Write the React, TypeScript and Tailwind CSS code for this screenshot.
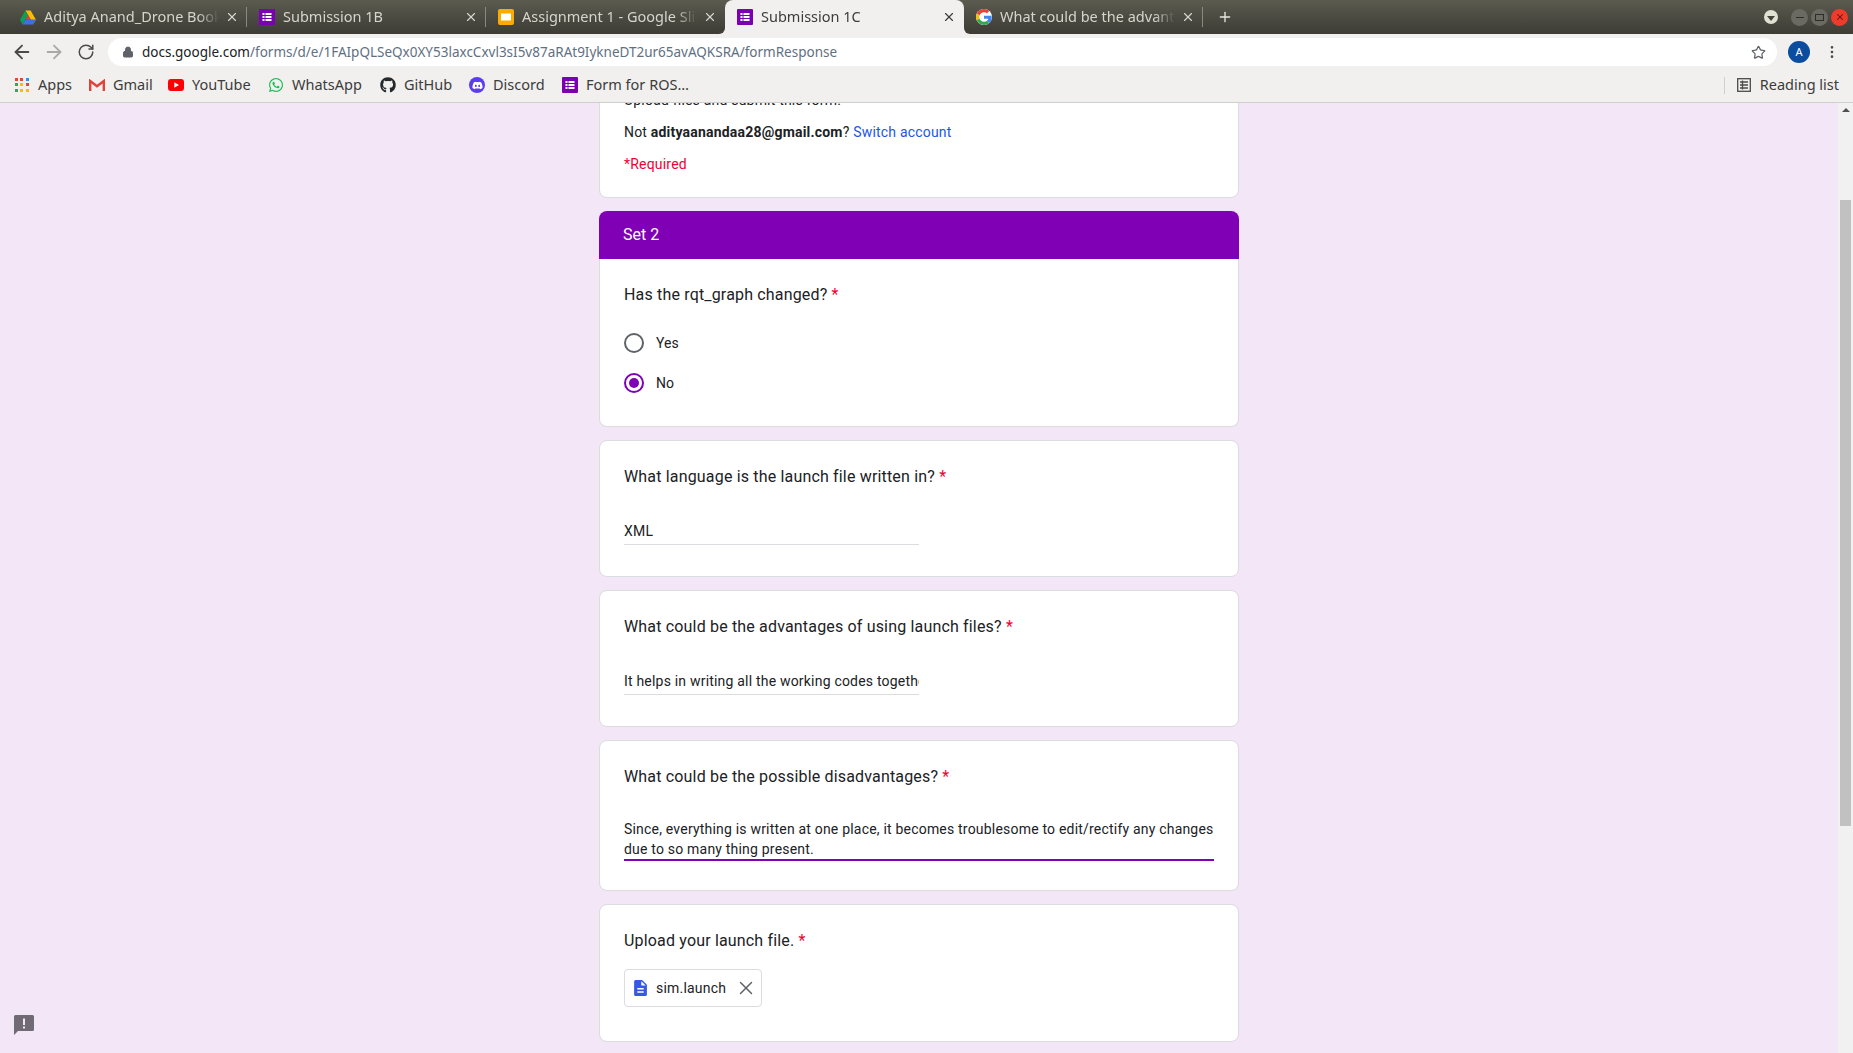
import { ArrowLeft, ArrowRight, EllipsisVertical, Lock, Plus, RotateCw, Star, X } from "lucide-react";
import { FaDiscord, FaGithub, FaWhatsapp } from "react-icons/fa";
import type { ReactNode } from "react";

const FormsIcon = ({ size = 16 }: { size?: number }) => (
    <svg width={size} height={size} viewBox="0 0 16 16">
        <rect width="16" height="16" rx="1" fill="#7a00b0" />
        <rect x="3.500" y="4" width="2" height="2" fill="#fff" />
        <rect x="3.500" y="7" width="2" height="2" fill="#fff" />
        <rect x="3.500" y="10" width="2" height="2" fill="#fff" />
        <rect x="6.500" y="4" width="6" height="2" fill="#fff" />
        <rect x="6.500" y="7" width="6" height="2" fill="#fff" />
        <rect x="6.500" y="10" width="6" height="2" fill="#fff" />
    </svg>
);

const DriveIcon = () => (
    <svg width="16" height="15" viewBox="0 0 16 14">
        <path d="M5.400 0h5.200l5.400 9.200h-5.200z" fill="#fbbc04" />
        <path d="M5.400 0 8 4.600 2.700 14 0 9.200z" fill="#0f9d58" />
        <path d="M5.300 9.200H16L13.300 14H2.700z" fill="#3f6fe0" />
        <path d="M8 4.600 10.800 9.200H5.300z" fill="#d9453a" />
    </svg>
);

const SlidesIcon = () => (
    <svg width="16" height="16" viewBox="0 0 16 16">
        <rect width="16" height="16" rx="2" fill="#f9ab00" />
        <rect x="3" y="4.500" width="10" height="7" fill="#fff" />
    </svg>
);

const GoogleIcon = () => (
    <svg width="16" height="16" viewBox="0 0 48 48">
        <circle cx="24" cy="24" r="24" fill="#fff" />
        <path fill="#ea4335" d="M24 9.500c3.500 0 6.600 1.200 9.100 3.600l6.800-6.800C35.800 2.400 30.400 0 24 0 14.600 0 6.500 5.400 2.600 13.200l7.900 6.200C12.400 13.700 17.700 9.500 24 9.500z" />
        <path fill="#4285f4" d="M46.900 24.500c0-1.600-.1-3.100-.4-4.500H24v9h12.900c-.6 3-2.300 5.500-4.800 7.200l7.700 6c4.500-4.200 7.100-10.300 7.100-17.700z" />
        <path fill="#fbbc05" d="M10.500 28.600c-.5-1.400-.8-3-.8-4.600s.3-3.200.8-4.600l-7.900-6.200C.9 16.500 0 20.100 0 24s.9 7.500 2.600 10.800z" />
        <path fill="#34a853" d="M24 48c6.500 0 11.900-2.100 15.900-5.800l-7.700-6c-2.200 1.500-4.900 2.300-8.200 2.300-6.300 0-11.600-4.200-13.500-9.900l-7.900 6.200C6.500 42.600 14.600 48 24 48z" />
    </svg>
);

const AppsIcon = () => {
    const colors = ["#ea4335", "#ea4335", "#4285f4", "#34a853", "#fbbc05", "#ea4335", "#34a853", "#fbbc05", "#fbbc05"];
    return (
        <div className="grid h-[14px] w-[14px] grid-cols-3 gap-[2px]">
            {colors.map((c, i) => (
                <span key={i} className="h-[3px] w-[3px]" style={{ backgroundColor: c }} />
            ))}
        </div>
    );
};

const GmailIcon = () => (
    <svg width="16" height="12" viewBox="0 0 16 12">
        <path d="M1.200 12V2L8 7.200 14.800 2v10" fill="none" stroke="#e0423a" strokeWidth="2.400" />
    </svg>
);

const YoutubeIcon = () => (
    <svg width="16" height="12" viewBox="0 0 16 12">
        <rect width="16" height="12" rx="3" fill="#f00" />
        <path d="M6.300 3.300v5.400L11 6z" fill="#fff" />
    </svg>
);

const tabs = [
    { icon: <DriveIcon />, title: "Aditya Anand_Drone Book", active: false, sep: true },
    { icon: <FormsIcon />, title: "Submission 1B", active: false, sep: true },
    { icon: <SlidesIcon />, title: "Assignment 1 - Google Slides", active: false, sep: false },
    { icon: <FormsIcon />, title: "Submission 1C", active: true, sep: false },
    { icon: <GoogleIcon />, title: "What could be the advantages", active: false, sep: true },
];

const bookmarks: { icon: ReactNode; label: string; width: string }[] = [
    { icon: <AppsIcon />, label: "Apps", width: "w-[75px]" },
    { icon: <GmailIcon />, label: "Gmail", width: "w-[79px]" },
    { icon: <YoutubeIcon />, label: "YouTube", width: "w-[100px]" },
    { icon: <FaWhatsapp size={16} color="#1ebe57" />, label: "WhatsApp", width: "w-[112px]" },
    { icon: <FaGithub size={16} color="#24292e" />, label: "GitHub", width: "w-[89px]" },
    {
        icon: (
            <span className="flex h-[16px] w-[16px] items-center justify-center rounded-full bg-[#5b3df0]">
                <FaDiscord size={11} color="#fff" />
            </span>
        ),
        label: "Discord",
        width: "w-[93px]",
    },
    { icon: <FormsIcon size={16} />, label: "Form for ROS…", width: "w-[130px]" },
];

const Tab = ({ icon, title, active, sep }: { icon: ReactNode; title: string; active: boolean; sep: boolean }) => (
    <div
        className={`relative flex h-[34px] w-[239px] shrink-0 items-center pl-[12px] pr-[8px] ${
            active ? "rounded-t-lg bg-[#f1f0ee] text-[#3c3c3c]" : "text-[#d6d5cc]"
        }`}
    >
        <span className="flex w-[16px] shrink-0 justify-center">{icon}</span>
        <span className="ml-[8px] min-w-0 flex-1 overflow-hidden whitespace-nowrap pb-[1px] text-[14.5px] [mask-image:linear-gradient(to_right,#000_88%,transparent)]">
            {title}
        </span>
        <X size={14} strokeWidth={2} className="ml-[6px] shrink-0" />
        {sep && <span className="absolute right-0 top-[7px] h-[20px] w-px bg-[#8a897f]" />}
        {active && (
            <>
                <span className="absolute -left-[6px] bottom-0 h-[6px] w-[6px] bg-[#f1f0ee]">
                    <span className="block h-[6px] w-[6px] rounded-br-[6px] bg-[#3f3e37]" />
                </span>
                <span className="absolute -right-[6px] bottom-0 h-[6px] w-[6px] bg-[#f1f0ee]">
                    <span className="block h-[6px] w-[6px] rounded-bl-[6px] bg-[#3f3e37]" />
                </span>
            </>
        )}
    </div>
);

const WinButton = ({ className, children }: { className: string; children: ReactNode }) => (
    <span className={`flex h-[17px] w-[17px] items-center justify-center rounded-full ${className}`}>{children}</span>
);

const Question = ({ children }: { children: ReactNode }) => (
    <div className="text-[16px] leading-[24px] tracking-[0.17px] text-[#202124]">
        {children} <span className="text-[#f00034]">*</span>
    </div>
);

const Card = ({ className, children }: { className: string; children: ReactNode }) => (
    <div className={`rounded-lg border border-[#dadce0] bg-white px-6 ${className}`}>{children}</div>
);

const Radio = ({ label, checked }: { label: string; checked?: boolean }) => (
    <div className="flex h-[40px] items-center gap-[12px] text-[14px] text-[#202124]">
        <span
            className={`flex h-[20px] w-[20px] items-center justify-center rounded-full border-2 ${
                checked ? "border-[#7f00b5]" : "border-[#5f6368]"
            }`}
        >
            {checked && <span className="h-[10px] w-[10px] rounded-full bg-[#7f00b5]" />}
        </span>
        {label}
    </div>
);

const Answer = ({ text }: { text: string }) => (
    <div className="mt-[30px] h-[26px] w-[295px] overflow-hidden whitespace-nowrap border-b border-[#dadce0] text-[14px] leading-[24px] tracking-[0.2px] text-[#202124]">
        {text}
    </div>
);

export default function App() {
    return (
        <div className="flex h-[1053px] flex-col overflow-hidden bg-[#f2e6f7] font-['Roboto',sans-serif]">
            <div className="flex h-[34px] shrink-0 items-center bg-gradient-to-b from-[#5c5b50] to-[#3d3c35] pl-[8px] font-['Noto_Sans',sans-serif]">
                {tabs.map((tab) => (
                    <Tab key={tab.title} {...tab} />
                ))}
                <Plus size={16} color="#e8e7df" className="ml-[14px]" />
                <div className="ml-auto flex items-center gap-[3px] pr-[5px]">
                    <span className="mr-[10px] flex h-[14px] w-[14px] items-center justify-center rounded-full bg-[#e2e0d2]">
                        <span className="mt-[2px] border-x-[4px] border-t-[5px] border-x-transparent border-t-[#45443c]" />
                    </span>
                    <WinButton className="bg-[#6b6a62]">
                        <span className="h-[1px] w-[8px] bg-[#2e2d28]" />
                    </WinButton>
                    <WinButton className="bg-[#6b6a62]">
                        <span className="h-[7px] w-[9px] border border-[#2e2d28]" />
                    </WinButton>
                    <WinButton className="bg-[#ef3b2c]">
                        <X size={10} color="#5a1a10" strokeWidth={2.500} />
                    </WinButton>
                </div>
            </div>

            <div className="flex h-[36px] shrink-0 items-center bg-[#f1f0ee] font-['Noto_Sans',sans-serif]">
                <ArrowLeft size={22} color="#4a4a4a" className="ml-[11px]" />
                <ArrowRight size={22} color="#a9a9a9" className="ml-[10px]" />
                <RotateCw size={18} color="#4a4a4a" className="ml-[12px]" />
                <div className="ml-[13px] flex h-[28px] w-[1669px] items-center rounded-full bg-white pl-[14px] pr-[11px]">
                    <Lock size={12} color="#5f6368" fill="#5f6368" />
                    <span className="ml-[8px] text-[13.5px] text-[#5f7082]">
                        <span className="text-[#202124]">docs.google.com</span>
                        /forms/d/e/1FAIpQLSeQx0XY53laxcCxvl3sI5v87aRAt9IykneDT2ur65avAQKSRA/formResponse
                    </span>
                    <Star size={15} color="#5f6368" className="ml-auto" />
                </div>
                <span className="ml-[11px] flex h-[22px] w-[22px] items-center justify-center rounded-full bg-[#0a4d9e] text-[11px] text-white">
                    A
                </span>
                <EllipsisVertical size={16} color="#4a4a4a" className="ml-[14px]" />
            </div>

            <div className="flex h-[33px] shrink-0 items-center border-b border-[#cfcfcf] bg-[#f1f0ee] pb-[2px] pl-[14px] font-['Noto_Sans',sans-serif] text-[14.5px] text-[#3c3c3c]">
                {bookmarks.map((b) => (
                    <div key={b.label} className={`flex shrink-0 items-center ${b.width}`}>
                        <span className="flex w-[16px] justify-center">{b.icon}</span>
                        <span className="ml-[8px] whitespace-nowrap">{b.label}</span>
                    </div>
                ))}
                <div className="ml-auto flex items-center pr-[14px]">
                    <span className="mr-[12px] h-[17px] w-px bg-[#cfcfcf]" />
                    <svg width="14" height="14" viewBox="0 0 14 14" fill="none" stroke="#4a4a4a" strokeWidth="1.300">
                        <rect x="0.700" y="0.700" width="12.600" height="12.600" />
                        <path d="M3 4h8M3 7h8M3 10h8M5.500 2.500v9" />
                    </svg>
                    <span className="ml-[9px]">Reading list</span>
                </div>
            </div>

            <div className="relative flex min-h-0 flex-1">
                <div className="min-w-0 flex-1 overflow-hidden">
                    <div className="mx-auto -mt-[20px] flex w-[640px] flex-col gap-[13px]">
                        <Card className="h-[115px] pt-[4px] text-[14px] leading-[24px] tracking-[0.2px] text-[#202124]">
                            <div>Upload files and submit this form.</div>
                            <div className="mt-[8px]">
                                Not <b className="font-bold">adityaanandaa28@gmail.com</b>?{" "}
                                <span className="text-[#1a56e8]">Switch account</span>
                            </div>
                            <div className="mt-[8px] text-[#f00034]">*Required</div>
                        </Card>

                        <div>
                            <div className="flex h-[48px] items-center rounded-t-lg bg-[#7f00b5] px-6 text-[16px] text-white">
                                Set 2
                            </div>
                            <div className="h-[168px] rounded-b-lg border-x border-b border-[#dadce0] bg-white px-6 pt-[24px]">
                                <Question>Has the rqt_graph changed?</Question>
                                <div className="mt-[16px]">
                                    <Radio label="Yes" />
                                    <Radio label="No" checked />
                                </div>
                            </div>
                        </div>

                        <Card className="h-[137px] pt-[24px]">
                            <Question>What language is the launch file written in?</Question>
                            <Answer text="XML" />
                        </Card>

                        <Card className="h-[137px] pt-[24px]">
                            <Question>What could be the advantages of using launch files?</Question>
                            <Answer text="It helps in writing all the working codes togethe" />
                        </Card>

                        <Card className="h-[151px] pt-[24px]">
                            <Question>What could be the possible disadvantages?</Question>
                            <div className="mt-[30px] border-b-2 border-[#7f00b5] text-[14px] leading-[20px] tracking-[0.2px] text-[#202124]">
                                Since, everything is written at one place, it becomes troublesome to edit/rectify any changes
                                <br />
                                due to so many thing present.
                            </div>
                        </Card>

                        <Card className="h-[138px] pt-[24px]">
                            <Question>Upload your launch file.</Question>
                            <div className="mt-[16px] flex h-[38px] w-[138px] items-center rounded border border-[#dadce0] pl-[9px] text-[14px] tracking-[0.2px] text-[#202124]">
                                <svg width="13" height="16" viewBox="4 2 16 20" className="shrink-0">
                                    <path
                                        d="M14 2H6c-1.100 0-2 .9-2 2v16c0 1.100.9 2 2 2h12c1.100 0 2-.9 2-2V8l-6-6zm2 16H8v-2h8v2zm0-4H8v-2h8v2zm-3-5V3.500L18.500 9H13z"
                                        fill="#3659e3"
                                    />
                                </svg>
                                <span className="ml-[9px]">sim.launch</span>
                                <X size={22} color="#5f6368" strokeWidth={1.600} className="ml-auto mr-[4px]" />
                            </div>
                        </Card>
                    </div>
                </div>

                <div className="flex w-[15px] shrink-0 flex-col items-center bg-[#f1f1f1]">
                    <span className="mt-[5px] border-x-[4px] border-b-[4px] border-x-transparent border-b-[#505050]" />
                    <span className="mt-[88px] h-[626px] w-[11px] bg-[#c1c1c1]" />
                </div>

                <svg width="20" height="20" viewBox="0 0 20 20" className="absolute bottom-[18px] left-[14px]">
                    <path d="M1.500 0h17A1.500 1.500 0 0 1 20 1.500v13a1.500 1.500 0 0 1-1.500 1.500H4l-4 4V1.500A1.500 1.500 0 0 1 1.500 0z" fill="#6f6a74" />
                    <path d="M9 3.500h2v6.500H9zM9 11.500h2v2H9z" fill="#f2e6f7" />
                </svg>
            </div>
        </div>
    );
}
